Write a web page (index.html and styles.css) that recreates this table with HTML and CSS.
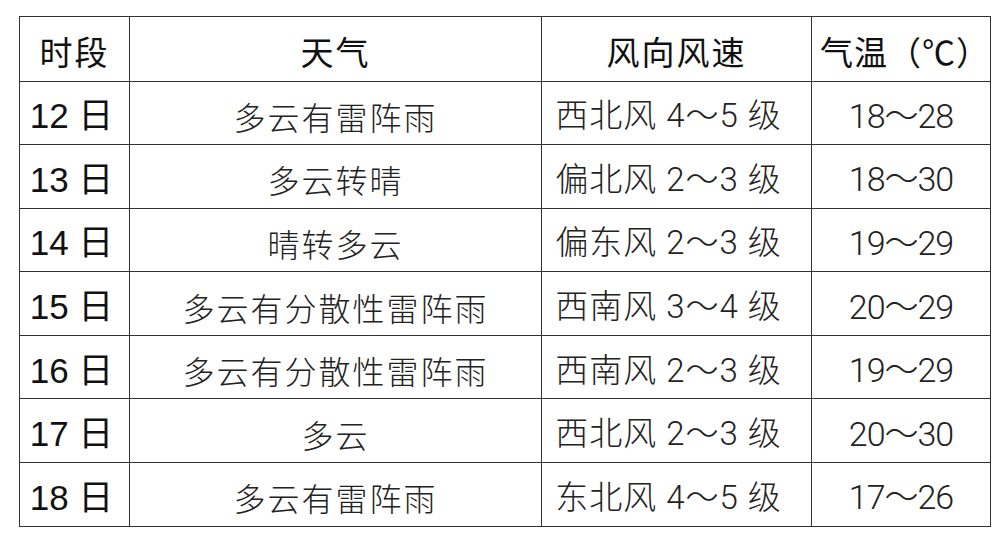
FILE: index.html
```html
<!DOCTYPE html>
<html lang="zh-CN">
<head>
<meta charset="utf-8">
<title>天气预报</title>
<link rel="stylesheet" href="styles.css">
</head>
<body>
<table class="wx">
  <colgroup>
    <col class="c-day">
    <col class="c-wx">
    <col class="c-wind">
    <col class="c-temp">
  </colgroup>
  <thead>
    <tr class="head">
      <th>时段</th>
      <th>天气</th>
      <th>风向风速</th>
      <th class="th-temp">气温（℃）</th>
    </tr>
  </thead>
  <tbody>
    <tr><td class="day">12 日</td><td class="cn">多云有雷阵雨</td><td class="wind">西北风 4～5 级</td><td class="temp">18～28</td></tr>
    <tr><td class="day">13 日</td><td class="cn">多云转晴</td><td class="wind">偏北风 2～3 级</td><td class="temp">18～30</td></tr>
    <tr><td class="day">14 日</td><td class="cn">晴转多云</td><td class="wind">偏东风 2～3 级</td><td class="temp">19～29</td></tr>
    <tr><td class="day">15 日</td><td class="cn">多云有分散性雷阵雨</td><td class="wind">西南风 3～4 级</td><td class="temp">20～29</td></tr>
    <tr><td class="day">16 日</td><td class="cn">多云有分散性雷阵雨</td><td class="wind">西南风 2～3 级</td><td class="temp">19～29</td></tr>
    <tr><td class="day">17 日</td><td class="cn">多云</td><td class="wind">西北风 2～3 级</td><td class="temp">20～30</td></tr>
    <tr><td class="day">18 日</td><td class="cn">多云有雷阵雨</td><td class="wind">东北风 4～5 级</td><td class="temp">17～26</td></tr>
  </tbody>
</table>
</body>
</html>
```

FILE: styles.css
```css
html, body {
  margin: 0;
  padding: 0;
  background: #ffffff;
}
body {
  padding: 16px 0 0 19px;
  font-family: "Noto Sans CJK SC", "Liberation Sans", sans-serif;
  color: #111;
}
.wx {
  border-collapse: collapse;
  table-layout: fixed;
  width: 971px;
}
.c-day { width: 110px; }
.c-wx { width: 412px; }
.c-wind { width: 270px; }
.c-temp { width: 179px; }

.wx th, .wx td {
  border: 1.5px solid #333;
  text-align: center;
  vertical-align: middle;
  padding: 6px 0 0 0;
  white-space: nowrap;
  line-height: 1;
}
.head th {
  height: 57.5px;
  font-family: "Noto Sans CJK SC", sans-serif;
  font-weight: 400;
  font-size: 33px;
  letter-spacing: 2px;
  color: #111;
}
.head .th-temp {
  letter-spacing: 1px;
  padding-left: 8px;
}
.wx tbody td {
  height: 56.6px;
}
.day {
  font-family: "Liberation Sans", "Noto Sans CJK SC", sans-serif;
  font-size: 35px;
  color: #111;
  padding-right: 6px !important;
}
.cn {
  font-family: "Noto Sans CJK SC", sans-serif;
  font-weight: 300;
  font-size: 32px;
  letter-spacing: 2px;
  color: #222;
}
.wind {
  font-family: "Roboto", "Noto Sans CJK SC", sans-serif;
  font-weight: 300;
  font-size: 33px;
  letter-spacing: 1px;
  color: #222;
  padding-right: 16px !important;
}
.temp {
  font-family: "Roboto", "Noto Sans CJK SC", sans-serif;
  font-weight: 300;
  font-size: 34px;
  letter-spacing: -1px;
  color: #222;
}
```
